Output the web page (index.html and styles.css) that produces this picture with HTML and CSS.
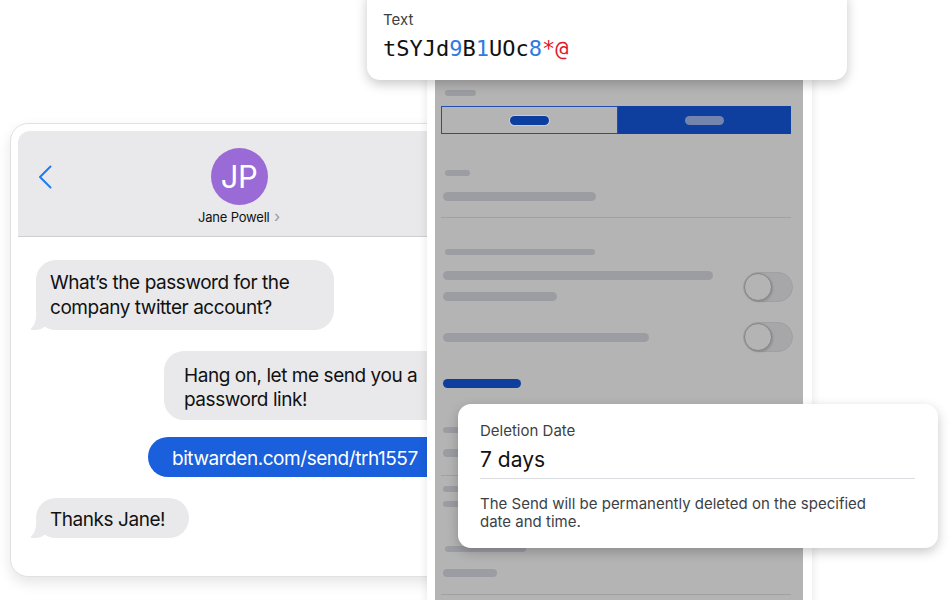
FILE: index.html
```html
<!DOCTYPE html>
<html>
<head>
    <meta charset="utf-8">
    <title>Send a password link</title>
    <link rel="stylesheet" href="styles.css">
</head>
<body>
<div class="stage">

    <!-- chat window, sits under the phone -->
    <div class="chat">
        <div class="chat-head">
            <div class="head-row">
                <svg class="back" width="14" height="24" viewBox="0 0 14 24">
                    <polyline points="12.5,1.5 2,12 12.5,22.5" fill="none" stroke="#1f7cf0" stroke-width="2" stroke-linecap="round" stroke-linejoin="round"/>
                </svg>
                <div class="avatar">JP</div>
                <div></div>
            </div>
            <div class="name">Jane Powell <span class="name-arrow">&rsaquo;</span></div>
        </div>
        <div class="chat-body">
            <div class="bubble in first">What’s the password for the company twitter account?</div>
            <div class="bubble out wide">Hang on, let me send you a password link!</div>
            <div class="bubble out link">bitwarden.com/send/trh1557</div>
            <div class="bubble in short">Thanks Jane!</div>
        </div>
    </div>

    <!-- phone with the greyed out send form -->
    <div class="phone">
        <div class="screen">
            <div class="sk sk-tiny"></div>
            <div class="seg">
                <div class="seg-off"><span class="pill pill-dark"></span></div>
                <div class="seg-on"><span class="pill pill-light"></span></div>
            </div>
            <div class="sk sk-label1"></div>
            <div class="sk sk-field1"></div>
            <div class="rule r1"></div>
            <div class="sk sk-label2"></div>

            <div class="opt opt1">
                <div class="opt-text">
                    <div class="sk sk-long"></div>
                    <div class="sk sk-mid"></div>
                </div>
                <div class="toggle"><span class="knob"></span></div>
            </div>
            <div class="opt opt2">
                <div class="opt-text">
                    <div class="sk sk-long2"></div>
                </div>
                <div class="toggle"><span class="knob"></span></div>
            </div>

            <div class="sk sk-blue"></div>
            <div class="sk sk-h1"></div>
            <div class="sk sk-h2"></div>
            <div class="rule r2"></div>
            <div class="sk sk-h3"></div>
            <div class="sk sk-h4"></div>
            <div class="sk sk-h5"></div>
            <div class="sk sk-h6"></div>
            <div class="rule r3"></div>
        </div>
    </div>

    <!-- floating field cards -->
    <div class="card text-card">
        <div class="label">Text</div>
        <div class="secret">tSYJd<span class="num">9</span>B<span class="num">1</span>UOc<span class="num">8</span><span class="sym">*@</span></div>
    </div>

    <div class="card del-card">
        <div class="label">Deletion Date</div>
        <div class="value">7 days</div>
        <div class="del-rule"></div>
        <p class="help">The Send will be permanently deleted on the specified date and time.</p>
    </div>

</div>
</body>
</html>
```

FILE: styles.css
```css
body { margin: 0; background: #fff; font-family: Inter, "Liberation Sans", sans-serif; color: #111; }
.stage { position: relative; width: 949px; height: 600px; overflow: hidden; background: #fff; }

/* chat window */
.chat { position: absolute; left: 10px; top: 123px; width: 458px; height: 454px; box-sizing: border-box; padding: 7px; border: 1px solid #e1e1e4; border-radius: 18px; background: #fff; box-shadow: 0 6px 14px rgba(0,0,0,0.10); }
.chat-head { border-bottom: 1px solid #cfcfd3; background: #e9e9eb; border-radius: 12px 12px 0 0; display: flex; flex-direction: column; align-items: center; padding-top: 17px; box-sizing: content-box; height: 88px; }
.head-row { width: 100%; display: grid; grid-template-columns: 1fr auto 1fr; align-items: center; }
.back { margin-left: 20px; }
.avatar { width: 57px; height: 57px; border-radius: 50%; background: #9a6bd6; color: #fff; font-size: 31px; line-height: 57px; text-align: center; letter-spacing: -0.5px; }
.name { margin-top: 3px; font-size: 13px; line-height: 16px; color: #111; letter-spacing: -0.2px; }
.name-arrow { color: #9a9aa0; font-size: 16px; margin-left: 1px; }

.chat-body { display: flex; flex-direction: column; padding: 23px 0 0 18px; }
.bubble { position: relative; box-sizing: border-box; font-size: 19px; line-height: 24px; letter-spacing: -0.45px; border-radius: 20px; }
.bubble.in { align-self: flex-start; background: #e9e9eb; color: #111; }
.bubble.out { align-self: flex-end; margin-right: 6px; }
.first { width: 298px; height: 70px; padding: 10px 14px 0 14px; line-height: 25px; }
.wide { width: 290px; height: 69px; margin-top: 21px; padding: 13px 14px 0 20px; background: #e9e9eb; color: #111; }
.link { width: 306px; height: 40px; margin-top: 17px; padding: 10px 10px 0 24px; background: #1a5fdc; color: #fff; }
.short { height: 40px; margin-top: 21px; padding: 10px 24px 0 14px; }

/* little tail on received bubbles */
.bubble.in::before { content: ""; position: absolute; left: -5px; bottom: 0; width: 18px; height: 16px; background: #e9e9eb; border-bottom-right-radius: 14px 12px; }
.bubble.in::after { content: ""; position: absolute; left: -12px; bottom: 0; width: 12px; height: 16px; background: #fff; border-bottom-right-radius: 10px 14px; }

/* phone */
.phone { position: absolute; left: 427px; top: 0; width: 385px; height: 620px; box-sizing: border-box; padding: 0 9px 0 8px; background: #fff; box-shadow: 0 0 10px rgba(0,0,0,0.10); }
.screen { height: 100%; box-sizing: border-box; padding: 90px 12px 0 6px; background: #b4b4b4; }
.sk { height: 9px; border-radius: 5px; background: #9b9da3; margin-left: 2px; }
.sk-tiny { width: 31px; height: 6px; margin-left: 4px; }
.seg { display: flex; height: 28px; margin-top: 10px; }
.seg-off { width: 177px; box-sizing: border-box; border: 1px solid #2350b0; display: flex; align-items: center; justify-content: center; }
.seg-on { flex: 1; background: #0f3f9e; display: flex; align-items: center; justify-content: center; }
.pill { width: 39px; height: 9px; border-radius: 5px; }
.pill-dark { background: #0c3e9f; box-shadow: 0 0 0 1px #c8cbd4; }
.pill-light { background: #7385ad; }
.sk-label1 { width: 25px; height: 6px; margin-left: 4px; margin-top: 36px; }
.sk-field1 { width: 153px; margin-top: 16px; }
.rule { height: 1px; background: #a1a1a3; }
.r1 { margin-top: 16px; }
.sk-label2 { width: 150px; height: 6px; margin-left: 4px; margin-top: 31px; }

.opt { display: flex; justify-content: space-between; margin-right: -2px; }
.opt1 { margin-top: 16px; align-items: flex-start; }
.opt2 { margin-top: 20px; align-items: center; }
.opt-text { display: flex; flex-direction: column; gap: 12px; }
.sk-long { width: 270px; }
.sk-mid { width: 114px; }
.sk-long2 { width: 206px; }
.toggle { width: 50px; height: 30px; box-sizing: border-box; border-radius: 15px; background: #a7a7a9; border: 1px solid #a0a0a2; position: relative; margin-top: 1px; }
.opt2 .toggle { margin-top: 0; }
.knob { position: absolute; left: 0; top: 0; width: 28px; height: 28px; box-sizing: border-box; border-radius: 50%; background: #b4b4b4; border: 1px solid #858587; box-shadow: 1px 1px 2px rgba(0,0,0,0.15); }

.sk-blue { width: 78px; margin-top: 27px; background: #0f3f9e; }
.sk-h1 { width: 140px; height: 6px; margin-top: 39px; }
.sk-h2 { width: 110px; height: 8px; margin-top: 16px; }
.r2 { margin-top: 18px; }
.sk-h3 { width: 120px; height: 6px; margin-top: 10px; }
.sk-h4 { width: 180px; height: 6px; margin-top: 9px; }
.sk-h5 { width: 81px; height: 6px; margin-left: 4px; margin-top: 39px; }
.sk-h6 { width: 54px; height: 8px; margin-top: 17px; }
.r3 { margin-top: 17px; }

/* floating cards */
.card { position: absolute; box-sizing: border-box; background: #fff; border-radius: 13px; box-shadow: 0 4px 12px rgba(0,0,0,0.22); }
.label { font-size: 15px; line-height: 18px; color: #3d3f45; }
.text-card { left: 367px; top: -12px; width: 480px; height: 92px; padding: 23px 16px 0 16px; }
.secret { margin-top: 7px; font-family: "DejaVu Sans Mono", "Liberation Mono", monospace; font-size: 22px; line-height: 26px; color: #111; }
.num { color: #2f7bdf; }
.sym { color: #e4182a; }

.del-card { left: 458px; top: 404px; width: 480px; height: 144px; padding: 18px 23px 0 22px; }
.value { margin-top: 8px; font-size: 21px; line-height: 24px; color: #111; }
.del-rule { height: 1px; margin-top: 6px; background: #dcdde0; }
.help { margin: 16px 0 0 0; width: 400px; font-size: 15px; line-height: 18px; color: #3d3f45; }
```
